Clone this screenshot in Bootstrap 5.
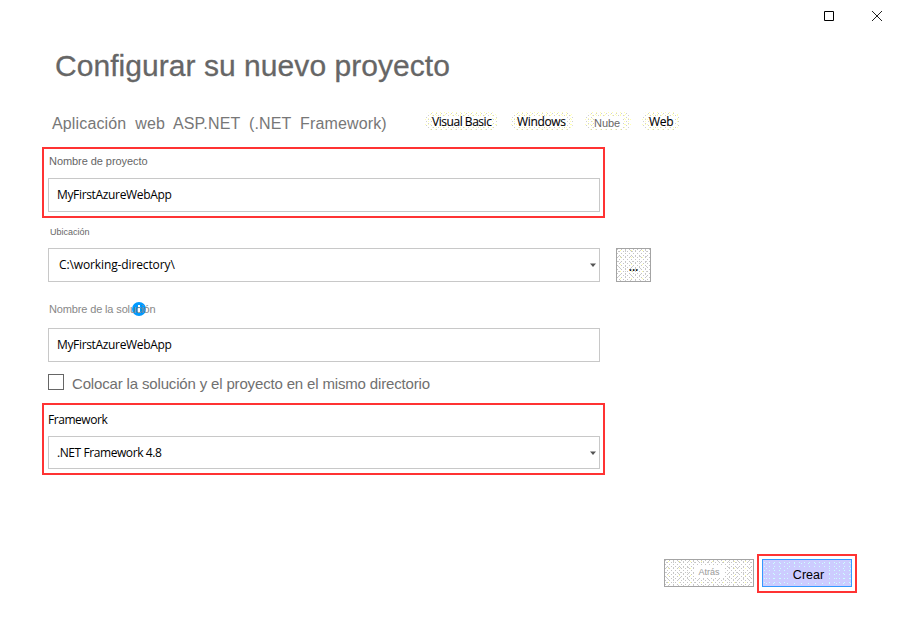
<!DOCTYPE html>
<html lang="es">
<head>
<meta charset="utf-8">
<meta name="viewport" content="width=device-width, initial-scale=1">
<title>Configurar su nuevo proyecto</title>
<link href="https://cdn.jsdelivr.net/npm/bootstrap@5.3.0/dist/css/bootstrap.min.css" rel="stylesheet">
<style>
body{width:900px;height:630px;overflow:hidden;font-family:"Liberation Sans",Arial,sans-serif;color:#666;background:#fff;line-height:1}
.ui{font-family:"Open Sans","Noto Sans",sans-serif;color:#000;font-size:12px;letter-spacing:-.34px}
.titlebar{height:32px;padding-right:18px;gap:38px}
.page-title{height:70px;padding:17px 0 0 55px;font-size:30px;line-height:34px;font-weight:400;color:#666;white-space:nowrap;letter-spacing:.05px;-webkit-text-stroke:.3px #666}
.subrow{height:45px;padding-left:52px}
.template-name{width:373px;font-size:16px;line-height:20px;padding-top:12px;white-space:nowrap;letter-spacing:.14px;word-spacing:4.3px;color:#777}
.tag{--g:#d0d0d0;--y:#ffffb0;height:18px;margin-top:10px;border-radius:6px;white-space:nowrap;
 background:
 conic-gradient(from 270deg at 1px 1px,var(--g) 90deg,transparent 0) 1px 1px/5px 4px,
 conic-gradient(from 270deg at 1px 1px,var(--g) 90deg,transparent 0) 3px 3px/5px 4px,
 conic-gradient(from 270deg at 1px 1px,var(--y) 90deg,transparent 0) 3px 0/4px 3px,
 conic-gradient(from 270deg at 1px 1px,var(--y) 90deg,transparent 0) 0 2px/5px 5px}
.tag span{background:#fff;display:block;height:11px;line-height:11px;margin-top:4px}
.tag.ui{-webkit-text-stroke:.1px #000}
.form-area{width:563px;margin-left:42px}
.marked{border:2px solid #f33}
.field{height:34px;border:1px solid #c8c8c8;padding:0 3px 0 8px;background:#fff;white-space:nowrap}
.lbl{font-size:11px;white-space:nowrap;letter-spacing:-.06px}
.dither{background:
 conic-gradient(from 270deg at 1px 1px,#ffffa8 90deg,transparent 0) 3px 1px/11px 7px,
 conic-gradient(from 270deg at 1px 1px,#c4c4c4 90deg,transparent 0) 0 0/4px 4px,
 conic-gradient(from 270deg at 1px 1px,#c4c4c4 90deg,transparent 0) 2px 2px/4px 4px,
 conic-gradient(from 270deg at 1px 1px,#ccc 90deg,transparent 0) 1px 2px/7px 5px,
 conic-gradient(from 270deg at 1px 1px,#ccc 90deg,transparent 0) 3px 1px/5px 6px,#fff}
.btn-flat{border-radius:0;padding:0;border:1px solid #a4a4a4}
.browse{width:35px;height:34px;margin-left:16px;font-weight:600;padding-top:3px;letter-spacing:-.2px}
.check{width:16px;height:16px;border:1px solid #666}
.same-dir{font-size:15px;margin:2px 0 0 8px;white-space:nowrap;letter-spacing:-.16px;color:#707070}
.back{width:90px;height:28px;font-size:9px;color:#999}
.back span{background:#fff;padding:1px 4px}
.create-frame{width:100px;height:39px;padding:3px}
.create{width:90px;height:28px;border:1px solid #39f;border-radius:0;padding:4px 0 0 3px;font-size:12.5px;color:#000;
 background:
 conic-gradient(from 270deg at 1px 1px,#cff 90deg,transparent 0) 1px 2px/5px 4px,
 conic-gradient(from 270deg at 1px 1px,#cff 90deg,transparent 0) 3px 3px/7px 5px,#ccf}
.create span{background:#ccf;padding:1px 4px}
</style>
<script src="https://cdn.jsdelivr.net/npm/bootstrap@5.3.0/dist/js/bootstrap.bundle.min.js"></script>
</head>
<body>
<header class="titlebar d-flex justify-content-end align-items-center">
<svg width="10" height="10" viewBox="0 0 10 10" aria-label="Maximizar"><path d="M.5.5h9v9h-9z" fill="none" stroke="#000"/></svg>
<svg width="10" height="10" viewBox="0 0 10 10" aria-label="Cerrar"><path d="M0 0l10 10M10 0L0 10" fill="none" stroke="#222"/></svg>
</header>
<h1 class="page-title m-0">Configurar su nuevo proyecto</h1>
<div class="subrow d-flex">
<div class="template-name">Aplicación web ASP.NET (.NET Framework)</div>
<div class="tag ui" style="width:72px;letter-spacing:-.46px"><span style="width:60px;margin-left:7px">Visual Basic</span></div>
<div class="tag ui" style="width:62px;margin-left:14px"><span class="mx-auto" style="width:50px">Windows</span></div>
<div class="tag" style="width:46px;margin-left:12px"><span class="mx-auto lbl" style="width:28px;height:13px;line-height:15px">Nube</span></div>
<div class="tag ui" style="width:38px;margin-left:11px"><span style="width:25px;margin-left:7px">Web</span></div>
</div>
<main class="form-area">
<section class="marked" style="height:71px;padding:5px 3px 0 4px">
<div class="lbl" style="height:24px;padding:2px 0 0 1px">Nombre de proyecto</div>
<div class="field ui d-flex align-items-center">MyFirstAzureWebApp</div>
</section>
<section style="padding:0 5px 0 6px">
<div style="height:30px;padding:10px 0 0 2px;font-size:9px">Ubicación</div>
<div class="d-flex" style="width:603px">
<div class="field ui d-flex align-items-center justify-content-between" style="width:552px;padding-left:10px;letter-spacing:-.12px">C:\working-directory\<svg width="6" height="4" viewBox="0 0 6 4"><path d="M0 .5h6L3 4z" fill="#555"/></svg></div>
<button class="btn btn-flat browse dither ui">...</button>
</div>
<div class="lbl position-relative" style="height:46px;padding:22px 0 0 1px;color:#888;letter-spacing:-.14px"><svg class="position-absolute" style="left:84px;top:20px" width="14" height="14" viewBox="0 0 14 14"><circle cx="7" cy="7" r="7" fill="#09f"/><path d="M6 3h2v2H6zM6 6h2v5H6z" fill="#fff"/></svg><span class="position-relative">Nombre de la solución</span></div>
<div class="field ui d-flex align-items-center">MyFirstAzureWebApp</div>
<div class="d-flex" style="height:41px;padding-top:12px"><div class="check"></div><div class="same-dir">Colocar la solución y el proyecto en el mismo directorio</div></div>
</section>
<section class="marked" style="height:72px;padding:8px 3px 0 4px">
<div class="ui" style="height:23px;line-height:14px;letter-spacing:-.45px">Framework</div>
<div class="field ui d-flex align-items-center justify-content-between" style="height:33px;letter-spacing:-.42px">.NET Framework 4.8<svg width="6" height="4" viewBox="0 0 6 4"><path d="M0 .5h6L3 4z" fill="#555"/></svg></div>
</section>
</main>
<footer class="d-flex justify-content-end" style="padding:79px 43px 0 0">
<button class="btn btn-flat back dither" style="margin:5px 3px 0 0"><span>Atrás</span></button>
<div class="marked create-frame"><button class="btn create d-block"><span>Crear</span></button></div>
</footer>
</body>
</html>
